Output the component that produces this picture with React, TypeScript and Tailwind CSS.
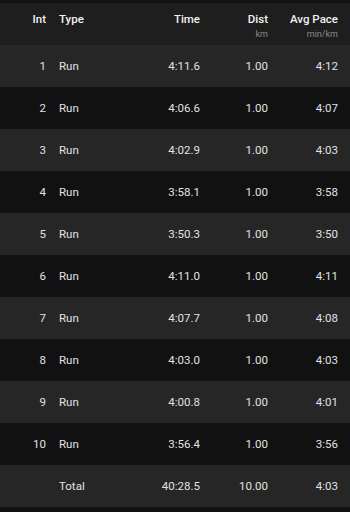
import React from 'react';

const laps = [
  { int: '1', time: '4:11.6', dist: '1.00', pace: '4:12' },
  { int: '2', time: '4:06.6', dist: '1.00', pace: '4:07' },
  { int: '3', time: '4:02.9', dist: '1.00', pace: '4:03' },
  { int: '4', time: '3:58.1', dist: '1.00', pace: '3:58' },
  { int: '5', time: '3:50.3', dist: '1.00', pace: '3:50' },
  { int: '6', time: '4:11.0', dist: '1.00', pace: '4:11' },
  { int: '7', time: '4:07.7', dist: '1.00', pace: '4:08' },
  { int: '8', time: '4:03.0', dist: '1.00', pace: '4:03' },
  { int: '9', time: '4:00.8', dist: '1.00', pace: '4:01' },
  { int: '10', time: '3:56.4', dist: '1.00', pace: '3:56' },
];

function Row({ int, type, time, dist, pace, dark }: { int: string; type: string; time: string; dist: string; pace: string; dark: boolean }) {
  return (
    <div className={`flex items-center h-[42px] pt-[2px] text-[11.5px] text-[#e2e2e2] ${dark ? 'bg-[#111111]' : 'bg-[#262626]'}`}>
      <div className="w-[46px] text-right">{int}</div>
      <div className="w-[100px] pl-[13px]">{type}</div>
      <div className="w-[54px] text-right">{time}</div>
      <div className="w-[68px] text-right">{dist}</div>
      <div className="w-[70px] text-right">{pace}</div>
    </div>
  );
}

export default function App() {
  return (
    <div className="w-[350px] h-[512px] bg-[#111111] pt-[3px] overflow-hidden" style={{ fontFamily: 'Roboto, "Liberation Sans", sans-serif' }}>
      {/* header */}
      <div className="flex h-[42px] bg-[#1e1e1e] text-[11.5px] leading-[14px] font-medium text-[#f2f2f2] pt-[9px]">
        <div className="w-[46px] text-right">Int</div>
        <div className="w-[100px] pl-[13px]">Type</div>
        <div className="w-[54px] text-right">Time</div>
        <div className="w-[68px] text-right flex flex-col">
          <span>Dist</span>
          <span className="text-[9px] leading-[12px] mt-[2px] font-normal text-[#8a8a8a]">km</span>
        </div>
        <div className="w-[70px] text-right flex flex-col">
          <span>Avg Pace</span>
          <span className="text-[9px] leading-[12px] mt-[2px] font-normal text-[#8a8a8a]">min/km</span>
        </div>
      </div>
      {laps.map((l, i) => (
        <Row key={l.int} int={l.int} type="Run" time={l.time} dist={l.dist} pace={l.pace} dark={i % 2 === 1} />
      ))}
      <Row int="" type="Total" time="40:28.5" dist="10.00" pace="4:03" dark={false} />
    </div>
  );
}
